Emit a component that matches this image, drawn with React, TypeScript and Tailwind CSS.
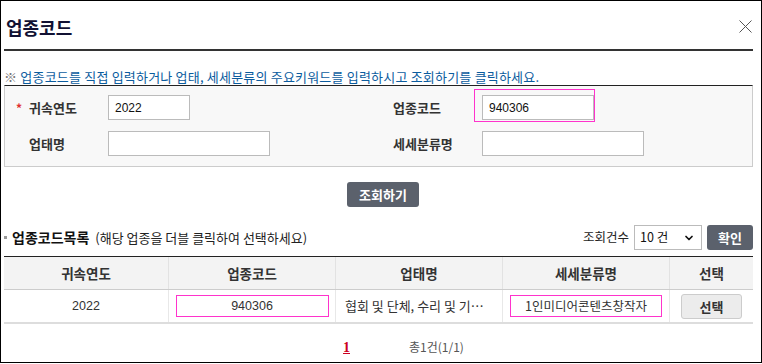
import { ChevronDown } from "lucide-react";

const font = { fontFamily: '"Noto Sans CJK KR", "Liberation Sans", sans-serif' };
const latin = { fontFamily: '"Liberation Sans", sans-serif' };

export default function App() {
  return (
    <div
      className="w-[762px] h-[363px] border border-black bg-white overflow-hidden text-[#333]"
      style={font}
    >
      {/* header */}
      <div className="flex items-center justify-between h-[48px] pl-[5px] pr-[8px]">
        <h1 className="text-[18px] font-bold text-[#111133] leading-none pt-[3px]">업종코드</h1>
        <svg width="13" height="13" viewBox="0 0 13 13" className="mt-[2px] mr-[1px]">
          <path d="M0.5 0.5 L12.5 12.5 M12.5 0.5 L0.5 12.5" stroke="#555" strokeWidth="1" />
        </svg>
      </div>
      <div className="ml-[3px] mr-[8px] h-[2px] bg-[#333]" />

      {/* notice */}
      <p className="ml-[3px] mt-[18px] text-[13px] tracking-[0.2px] leading-[16px] text-[#0b5c9e] whitespace-nowrap">
        <span className="text-[#777]">※</span> 업종코드를 직접 입력하거나 업태, 세세분류의 주요키워드를 입력하시고 조회하기를 클릭하세요.
      </p>

      {/* search box */}
      <div className="ml-[3px] mr-[8px] h-[82px] border border-[#ccc] border-t-[#222] bg-[#f8f8f8] pt-[9px] grid grid-cols-[388px_1fr] content-start gap-y-[11px]">
        <div className="flex items-center h-[25px]">
          <span className="w-[24px] pl-[11px] text-[#e03030] text-[12px] font-bold">*</span>
          <span className="w-[79px] text-[13px] font-bold text-[#333]">귀속연도</span>
          <div className="w-[82px] h-[25px] border border-[#bbb] bg-white flex items-center pl-[6px] text-[12px] text-[#111]" style={latin}>2022</div>
        </div>
        <div className="flex items-center h-[25px]">
          <span className="w-[89px] text-[13px] font-bold text-[#333]">업종코드</span>
          <div className="relative w-[112px] h-[25px] border border-[#bbb] bg-white flex items-center pl-[6px] text-[12px] text-[#111]" style={latin}>
            940306
            <div className="absolute left-[-9px] top-[-7px] w-[121px] h-[33px] border border-[#ff33cc]" />
          </div>
        </div>
        <div className="flex items-center h-[25px]">
          <span className="w-[24px]" />
          <span className="w-[79px] text-[13px] font-bold text-[#333]">업태명</span>
          <div className="w-[162px] h-[25px] border border-[#bbb] bg-white" />
        </div>
        <div className="flex items-center h-[25px]">
          <span className="w-[89px] text-[13px] font-bold text-[#333]">세세분류명</span>
          <div className="w-[162px] h-[25px] border border-[#bbb] bg-white" />
        </div>
      </div>

      {/* search button */}
      <div className="flex justify-center mt-[15px] pl-[4px]">
        <button className="w-[72px] h-[25px] rounded-[3px] bg-[#5b616c] text-white text-[13px] font-bold leading-none">
          조회하기
        </button>
      </div>

      {/* list title */}
      <div className="flex items-center justify-between ml-[3px] mr-[8px] mt-[18px] h-[25px]">
        <div className="flex items-center whitespace-nowrap">
          <span className="w-[3px] h-[3px] bg-[#999] mr-[5px]" />
          <span className="text-[14px] font-bold text-[#111]">업종코드목록</span>
          <span className="ml-[6px] text-[13px] text-[#222]">(해당 업종을 더블 클릭하여 선택하세요)</span>
        </div>
        <div className="flex items-center">
          <span className="text-[12.5px] text-[#222] mr-[5px]">조회건수</span>
          <div className="w-[68px] h-[25px] border border-[#bbb] bg-white flex items-center justify-between pl-[5px] pr-[6px] text-[12.5px] text-[#111]">
            <span>10 건</span>
            <ChevronDown className="w-[12px] h-[12px] text-[#111]" strokeWidth={3.5} />
          </div>
          <button className="ml-[5px] w-[46px] h-[25px] rounded-[3px] bg-[#5b616c] text-white text-[13px] font-bold leading-none">
            확인
          </button>
        </div>
      </div>

      {/* table */}
      <div className="ml-[3px] mr-[8px] mt-[6px] border-t border-[#222]">
        <div className="grid grid-cols-[165px_167px_167px_167px_83px] h-[33px] bg-[#f3f3f3] border-b border-[#ccc] text-[13.5px] font-bold text-[#333]">
          <div className="flex items-center justify-center border-r border-[#e2e2e2]">귀속연도</div>
          <div className="flex items-center justify-center border-r border-[#e2e2e2]">업종코드</div>
          <div className="flex items-center justify-center border-r border-[#e2e2e2]">업태명</div>
          <div className="flex items-center justify-center border-r border-[#e2e2e2]">세세분류명</div>
          <div className="flex items-center justify-center">선택</div>
        </div>
        <div className="grid grid-cols-[165px_167px_167px_167px_83px] h-[34px] border-b-2 border-[#ddd] text-[12.5px] text-[#333]">
          <div className="flex items-center justify-center border-r border-[#e8e8e8]" style={latin}>2022</div>
          <div className="flex items-center justify-center border-r border-[#e8e8e8]">
            <div className="w-[153px] h-[22px] border border-[#ff33cc] flex items-center justify-center" style={latin}>940306</div>
          </div>
          <div className="flex items-center pl-[9px] pr-[6px] border-r border-[#e8e8e8] whitespace-nowrap overflow-hidden text-[13px]">
            협회 및 단체, 수리 및 기…
          </div>
          <div className="flex items-center justify-center border-r border-[#e8e8e8]">
            <div className="w-[152px] h-[22px] border border-[#ff33cc] flex items-center justify-center whitespace-nowrap">1인미디어콘텐츠창작자</div>
          </div>
          <div className="flex items-center justify-center">
            <button className="w-[61px] h-[25px] rounded-[3px] border border-[#ccc] bg-[#ececec] text-[13px] font-bold text-[#333] leading-none">
              선택
            </button>
          </div>
        </div>
      </div>

      {/* pagination */}
      <div className="flex items-center mt-[15px] h-[16px]">
        <span className="ml-[342px] text-[14px] font-bold text-[#cc0022] underline" style={{ fontFamily: '"Liberation Serif", serif' }}>1</span>
        <span className="ml-[59px] text-[12px] text-[#555]">총1건(1/1)</span>
      </div>
    </div>
  );
}
